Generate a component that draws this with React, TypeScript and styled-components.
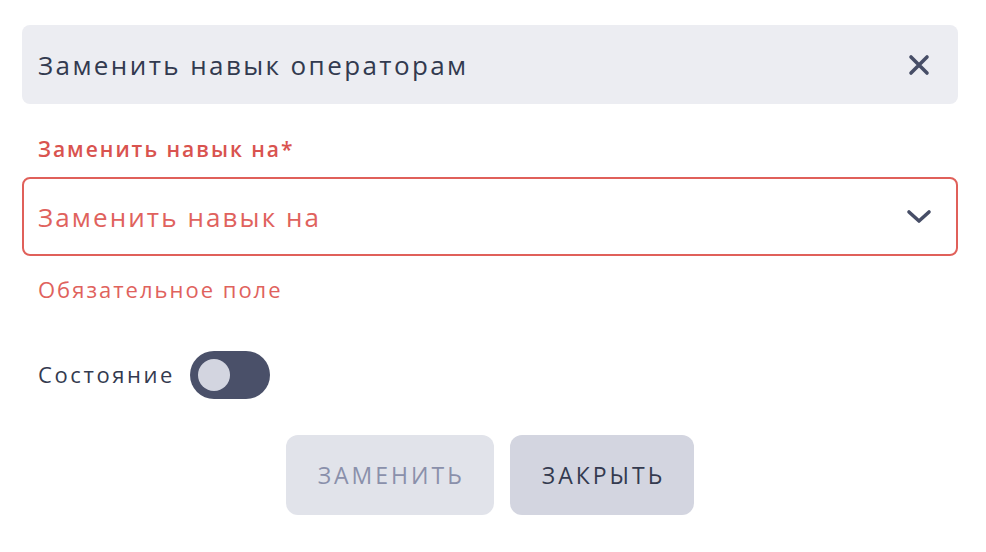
import React, { FC, useState } from 'react';
import styled, { createGlobalStyle } from 'styled-components';

const GlobalStyle = createGlobalStyle`
  body {
    margin: 0;
    background: #ffffff;
    font-family: 'Open Sans', 'Noto Sans', sans-serif;
  }
`;

const CloseSvg: FC = () => (
  <svg width="22" height="22" viewBox="0 0 22 22" fill="none">
    <path d="M3 3L19 19M19 3L3 19" stroke="#474E67" strokeWidth="3.6" strokeLinecap="round" />
  </svg>
);

const ChevronSvg: FC = () => (
  <svg width="26" height="16" viewBox="0 0 26 16" fill="none">
    <path d="M3 3L13 12L23 3" stroke="#474E67" strokeWidth="3.6" strokeLinecap="round" strokeLinejoin="round" />
  </svg>
);

const App: FC = () => {
  const [enabled, setEnabled] = useState<boolean>(false);

  return (
    <>
      <GlobalStyle />
      <Modal>
        <Header>
          <Title>Заменить навык операторам</Title>
          <IconButton aria-label="close">
            <CloseSvg />
          </IconButton>
        </Header>
        <FieldLabel>Заменить навык на*</FieldLabel>
        <Select>
          <Placeholder>Заменить навык на</Placeholder>
          <ChevronSvg />
        </Select>
        <ErrorText>Обязательное поле</ErrorText>
        <StateRow>
          <StateLabel>Состояние</StateLabel>
          <Toggle $on={enabled} onClick={() => setEnabled(!enabled)}>
            <Knob $on={enabled} />
          </Toggle>
        </StateRow>
        <ButtonsWrapper>
          <Button $variant="disabled">ЗАМЕНИТЬ</Button>
          <Button $variant="secondary">ЗАКРЫТЬ</Button>
        </ButtonsWrapper>
      </Modal>
    </>
  );
};

export default App;

const Modal = styled.div`
  display: flex;
  flex-direction: column;
  padding: 25px 28px 0 22px;
`;
const Header = styled.div`
  height: 79px;
  display: flex;
  align-items: center;
  justify-content: space-between;
  padding: 0 28px 0 16px;
  background-color: #ecedf2;
  border-radius: 8px;
`;
const Title = styled.div`
  font-size: 26px;
  font-weight: 500;
  color: #323a4f;
  letter-spacing: 2.4px;
`;
const IconButton = styled.button`
  display: flex;
  padding: 0;
  border: none;
  background: none;
  cursor: pointer;
`;
const FieldLabel = styled.div`
  margin-top: 33px;
  line-height: 24px;
  font-size: 21px;
  font-weight: 600;
  color: #d9534f;
  padding-left: 16px;
  letter-spacing: 2px;
`;
const Select = styled.div`
  margin-top: 16px;
  height: 79px;
  box-sizing: border-box;
  display: flex;
  align-items: center;
  justify-content: space-between;
  padding: 0 24px 0 14px;
  border: 2px solid #e0605a;
  border-radius: 8px;
  cursor: pointer;
`;
const Placeholder = styled.div`
  font-size: 26px;
  color: #e0625d;
  letter-spacing: 2.1px;
`;
const ErrorText = styled.div`
  margin-top: 21px;
  line-height: 24px;
  font-size: 22px;
  color: #e0625d;
  padding-left: 16px;
  letter-spacing: 2px;
`;
const StateRow = styled.div`
  margin-top: 50px;
  display: flex;
  align-items: center;
  gap: 15px;
  padding-left: 16px;
`;
const StateLabel = styled.div`
  font-size: 22px;
  font-weight: 500;
  color: #343a4f;
  letter-spacing: 2.6px;
  margin-top: -2px;
`;
const Toggle = styled.div<{ $on: boolean }>`
  width: 80px;
  height: 48px;
  box-sizing: border-box;
  padding: 8px;
  border-radius: 24px;
  background-color: #4a5069;
  display: flex;
  justify-content: ${({ $on }) => ($on ? 'flex-end' : 'flex-start')};
  cursor: pointer;
`;
const Knob = styled.div<{ $on: boolean }>`
  width: 32px;
  height: 32px;
  border-radius: 50%;
  background-color: ${({ $on }) => ($on ? '#ffffff' : '#d3d5e0')};
`;
const ButtonsWrapper = styled.div`
  margin-top: 36px;
  display: flex;
  justify-content: center;
  gap: 16px;
`;
const Button = styled.button<{ $variant: 'disabled' | 'secondary' }>`
  height: 80px;
  padding: 0 29px 0 32px;
  border: none;
  border-radius: 12px;
  font-family: inherit;
  font-size: 23px;
  font-weight: 500;
  letter-spacing: 3px;
  background-color: ${({ $variant }) => ($variant === 'disabled' ? '#e1e3ea' : '#d3d5e0')};
  color: ${({ $variant }) => ($variant === 'disabled' ? '#8a90ab' : '#343a4f')};
  cursor: ${({ $variant }) => ($variant === 'disabled' ? 'default' : 'pointer')};
`;
